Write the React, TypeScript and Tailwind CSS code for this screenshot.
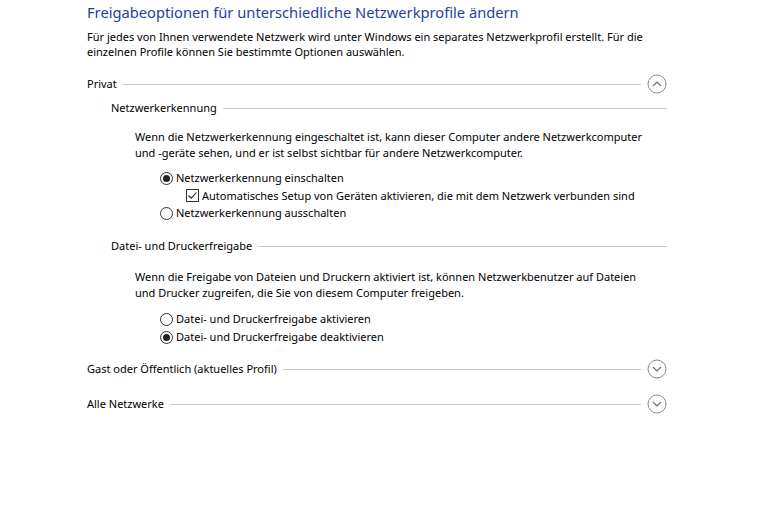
import React from "react";

function Chevron({ up }: { up?: boolean }) {
  return (
    <svg width="20" height="20" viewBox="0 0 20 20" className="shrink-0">
      <circle cx="10" cy="10" r="9" fill="none" stroke="#8a8a8a" strokeWidth="1" />
      {up ? (
        <path d="M6 12 L10 8 L14 12" fill="none" stroke="#6f6f6f" strokeWidth="1.2" />
      ) : (
        <path d="M6 8 L10 12 L14 8" fill="none" stroke="#6f6f6f" strokeWidth="1.2" />
      )}
    </svg>
  );
}

function Radio({ checked, label }: { checked?: boolean; label: string }) {
  return (
    <div className="flex items-center h-[18px]">
      <span className="w-[13px] h-[13px] rounded-full border border-[#333] flex items-center justify-center mr-[3px] bg-white">
        {checked && <span className="w-[7px] h-[7px] rounded-full bg-[#222]" />}
      </span>
      <span>{label}</span>
    </div>
  );
}

function Section({ title, open }: { title: string; open?: boolean }) {
  return (
    <div className="flex items-center h-[20px]">
      <span className="pr-[6px] whitespace-nowrap">{title}</span>
      <div className="flex-1 h-px bg-[#c8c8c8] mr-[6px]" />
      <Chevron up={open} />
    </div>
  );
}

function SubHeader({ title }: { title: string }) {
  return (
    <div className="flex items-center h-[18px] pl-[24px]">
      <span className="pr-[6px] whitespace-nowrap">{title}</span>
      <div className="flex-1 h-px bg-[#c8c8c8]" />
    </div>
  );
}

export default function App() {
  return (
    <div
      className="w-[774px] h-[516px] bg-white text-[11px] text-black leading-[16px]"
      style={{ fontFamily: '"Noto Sans", "Open Sans", sans-serif' }}
    >
      <div className="w-[580px] ml-[87px] pt-[1px]">
        <h1 className="text-[14.7px] leading-[22px] text-[#1e3fa3] whitespace-nowrap">
          Freigabeoptionen für unterschiedliche Netzwerkprofile ändern
        </h1>
        <p className="mt-[6px] leading-[15px] whitespace-nowrap">
          Für jedes von Ihnen verwendete Netzwerk wird unter Windows ein separates Netzwerkprofil erstellt. Für die
          <br />
          einzelnen Profile können Sie bestimmte Optionen auswählen.
        </p>

        <div className="mt-[15px]">
          <Section title="Privat" open />
        </div>
        <div className="mt-[5px]">
          <SubHeader title="Netzwerkerkennung" />
        </div>
        <p className="ml-[48px] mt-[12px] whitespace-nowrap">
          Wenn die Netzwerkerkennung eingeschaltet ist, kann dieser Computer andere Netzwerkcomputer
          <br />
          und -geräte sehen, und er ist selbst sichtbar für andere Netzwerkcomputer.
        </p>
        <div className="ml-[73px] mt-[8px]">
          <Radio checked label="Netzwerkerkennung einschalten" />
          <div className="flex items-center h-[17px] ml-[26px]">
            <span className="w-[13px] h-[13px] border border-[#333] flex items-center justify-center mr-[3px]">
              <svg width="11" height="11" viewBox="0 0 11 11">
                <path d="M1.5 5.5 L4.2 8.2 L9.5 2.5" fill="none" stroke="#222" strokeWidth="1.1" />
              </svg>
            </span>
            <span className="whitespace-nowrap">
              Automatisches Setup von Geräten aktivieren, die mit dem Netzwerk verbunden sind
            </span>
          </div>
          <Radio label="Netzwerkerkennung ausschalten" />
        </div>

        <div className="mt-[15px]">
          <SubHeader title="Datei- und Druckerfreigabe" />
        </div>
        <p className="ml-[48px] mt-[14px] whitespace-nowrap">
          Wenn die Freigabe von Dateien und Druckern aktiviert ist, können Netzwerkbenutzer auf Dateien
          <br />
          und Drucker zugreifen, die Sie von diesem Computer freigeben.
        </p>
        <div className="ml-[73px] mt-[9px]">
          <Radio label="Datei- und Druckerfreigabe aktivieren" />
          <Radio checked label="Datei- und Druckerfreigabe deaktivieren" />
        </div>

        <div className="mt-[13px]">
          <Section title="Gast oder Öffentlich (aktuelles Profil)" />
        </div>
        <div className="mt-[15px]">
          <Section title="Alle Netzwerke" />
        </div>
      </div>
    </div>
  );
}
